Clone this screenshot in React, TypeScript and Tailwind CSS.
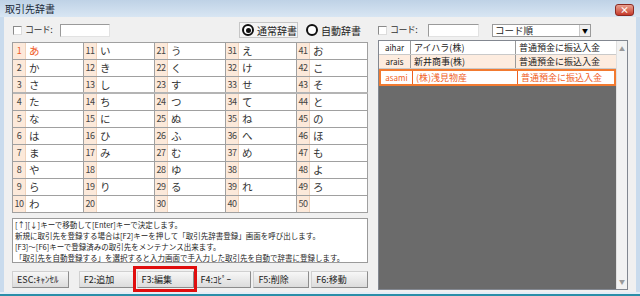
import React from "react";

const font = { fontFamily: '"Noto Sans CJK JP", "Noto Sans", sans-serif' };

const kana = [
  ["あ", "か", "さ", "た", "な", "は", "ま", "や", "ら", "わ"],
  ["い", "き", "し", "ち", "に", "ひ", "み", "", "り", ""],
  ["う", "く", "す", "つ", "ぬ", "ふ", "む", "ゆ", "る", ""],
  ["え", "け", "せ", "て", "ね", "へ", "め", "", "れ", ""],
  ["お", "こ", "そ", "と", "の", "ほ", "も", "よ", "ろ", ""],
];

const messages = [
  "[↑][↓]キーで移動して[Enter]キーで決定します。",
  "新規に取引先を登録する場合は[F2]キーを押して「取引先辞書登録」画面を呼び出します。",
  "[F3]～[F6]キーで登録済みの取引先をメンテナンス出来ます。",
  "「取引先を自動登録する」を選択すると入力画面で手入力した取引先を自動で辞書に登録します。",
];

const partners = [
  { code: "aihar", name: "アイハラ(株)", kind: "普通預金に振込入金", state: "plain" },
  { code: "arais", name: "新井商事(株)", kind: "普通預金に振込入金", state: "alt" },
  { code: "asami", name: "(株)浅見物産", kind: "普通預金に振込入金", state: "selected" },
];

const Checkbox = ({ label, width }: { label: string; width: string }) => (
  <div className={`${width} shrink-0 flex items-center gap-[3px] text-[9px] tracking-[-0.6px] text-[#333] whitespace-nowrap`}>
    <span className="w-[9px] h-[9px] shrink-0 bg-white border border-[#8a8a8a] border-r-[#dcdcdc] border-b-[#dcdcdc]" />
    <span>{label}</span>
  </div>
);

const TextBox = ({ width }: { width: string }) => (
  <div className={`${width} shrink-0 h-[13px] bg-white border border-[#9a9a9a] border-r-[#e2e2e2] border-b-[#e2e2e2]`} />
);

const Radio = ({ label, checked }: { label: string; checked?: boolean }) => (
  <div className="flex items-center gap-[3px] text-[10px] text-[#222] whitespace-nowrap shrink-0">
    <span className="w-[12px] h-[12px] shrink-0 rounded-full border-[2px] border-[#111] bg-white flex items-center justify-center">
      {checked && <span className="w-[5px] h-[5px] rounded-full bg-[#111]" />}
    </span>
    <span>{label}</span>
  </div>
);

const KanaGrid = () => (
  <div className="mt-[4px] bg-white border-l border-t border-[#a0a0a0]">
    {Array.from({ length: 10 }).map((_, r) => (
      <div
        key={r}
        className={`flex h-[17px] border-[#a0a0a0] ${r === 2 ? "border-b-2 border-b-[#b4b4b4]" : "border-b"}`}
      >
        {kana.map((col, c) => {
          const active = r === 0 && c === 0;
          return (
            <div key={c} className="w-[71px] flex border-r border-[#a0a0a0]">
              <span
                className={`w-[13px] shrink-0 bg-[#fce9da] border-r border-[#f1d3bb] flex items-center justify-center text-[9px] tracking-[-0.5px] ${active ? "text-[#f05a1e]" : "text-[#444]"}`}
              >
                {c * 10 + r + 1}
              </span>
              <span
                className={`pl-[3px] flex items-center text-[10.5px] ${active ? "text-[#f05a1e]" : "text-[#333]"}`}
              >
                {col[r]}
              </span>
            </div>
          );
        })}
      </div>
    ))}
  </div>
);

const Button = ({ label, className = "" }: { label: string; className?: string }) => (
  <div
    className={`h-[17px] flex items-center pl-[4px] text-[9px] text-[#222] whitespace-nowrap bg-gradient-to-b from-[#f7f7f7] to-[#dcdcdc] border border-[#d0d0d0] border-r-[#8c8c8c] border-b-[#8c8c8c] ${className}`}
  >
    {label}
  </div>
);

const PartnerTable = () => (
  <div className="mt-[2px] h-[250px] flex border border-[#828790] bg-[#6b6b6b]">
    <div className="flex-1">
      {partners.map((p) => {
        const selected = p.state === "selected";
        const text = selected ? "text-[#f0601e]" : "text-[#222]";
        const line = selected ? "border-[#f0601e]" : "border-[#9a9a9a]";
        return (
          <div
            key={p.code}
            className={`flex box-content h-[13px] text-[9px] leading-[13px] whitespace-nowrap ${text} ${
              selected
                ? "bg-white border-2 border-[#f27a30]"
                : p.state === "alt"
                  ? "bg-[#fdecdf] border-b border-[#c9c9c9]"
                  : "bg-white border-b border-[#c9c9c9]"
            }`}
          >
            <span className={`w-[32px] flex items-center justify-center text-[8px] border-r ${line}`}>
              {p.code}
            </span>
            <span className={`w-[105px] flex items-center pl-[3px] border-r ${line}`}>{p.name}</span>
            <span className="flex-1 flex items-center pl-[3px]">{p.kind}</span>
          </div>
        );
      })}
    </div>
    <div className="w-[11px] bg-[#f2f2f2] border-l border-[#e0e0e0] flex flex-col justify-between items-center py-[3px] text-[6px] text-[#9a9a9a]">
      <span>▲</span>
      <span>▼</span>
    </div>
  </div>
);

export default function App() {
  return (
    <div style={font} className="w-[640px] h-[296px] flex flex-col bg-[#c9dbed] overflow-hidden">
      <div className="h-[17px] shrink-0 flex items-center justify-between pl-[5px] pr-[6px] bg-gradient-to-b from-[#bfd2e6] to-[#d8e6f3]">
        <span className="text-[10px] text-[#1b2a3a]">取引先辞書</span>
        <span className="w-[19px] h-[12px] mt-[2px] rounded-[3px] bg-gradient-to-b from-[#e8a090] to-[#c5372a] border border-[#8a2a22] flex items-center justify-center text-white text-[9px] font-bold leading-none">
          ×
        </span>
      </div>

      <div className="flex-1 mx-[4px] bg-[#f0f0f0] flex pl-[8px] pr-[8px] pt-[5px] pb-[2px] gap-[10px]">
        <div className="w-[356px] flex flex-col">
          <div className="h-[16px] flex items-center">
            <div className="ml-[1px]">
              <Checkbox label="コード:" width="w-[47px]" />
            </div>
            <TextBox width="w-[50px]" />
            <div className="ml-[129px] w-[59px] h-[16px] px-[2px] flex items-center border border-[#c6c6c6] bg-[#f4f4f4]">
              <Radio label="通常辞書" checked />
            </div>
            <div className="ml-[8px]">
              <Radio label="自動辞書" />
            </div>
          </div>

          <KanaGrid />

          <div className="mt-[5px] h-[45px] bg-white border border-[#9a9a9a] pl-[2px] text-[7.5px] leading-[11px] text-[#222] overflow-hidden">
            {messages.map((m) => (
              <div key={m} className="whitespace-nowrap">
                {m}
              </div>
            ))}
          </div>

          <div className="mt-[8px] flex items-center">
            <Button label="ESC:ｷｬﾝｾﾙ" className="w-[57px]" />
            <Button label="F2:追加" className="w-[56px] ml-[10px]" />
            <div className="relative ml-[2px]">
              <Button label="F3:編集" className="w-[57px]" />
              <div className="absolute left-[-4px] right-[-3px] top-[-5px] bottom-[-4px] border-[3px] border-[#e00d0d]" />
            </div>
            <Button label="F4:ｺﾋﾟｰ" className="w-[56px] ml-[2px]" />
            <Button label="F5:削除" className="w-[56px] ml-[2px]" />
            <Button label="F6:移動" className="w-[57px] ml-[2px]" />
          </div>
        </div>

        <div className="w-[250px] flex flex-col">
          <div className="h-[16px] flex items-center">
            <Checkbox label="コード:" width="w-[50px]" />
            <TextBox width="w-[51px]" />
            <div className="ml-[13px] w-[99px] shrink-0 h-[13px] bg-white border border-[#9a9a9a] flex items-center justify-between">
              <span className="pl-[2px] text-[9.5px] text-[#222] whitespace-nowrap">コード順</span>
              <span className="w-[11px] h-[11px] bg-[#f0f0f0] border-l border-[#c8c8c8] flex items-center justify-center text-[6px] text-black">
                ▼
              </span>
            </div>
          </div>

          <PartnerTable />
        </div>
      </div>

      <div className="h-[2px] shrink-0 bg-[#e4edf6]" />
      <div className="h-[2px] shrink-0 bg-[#2a8ea8]" />
    </div>
  );
}
